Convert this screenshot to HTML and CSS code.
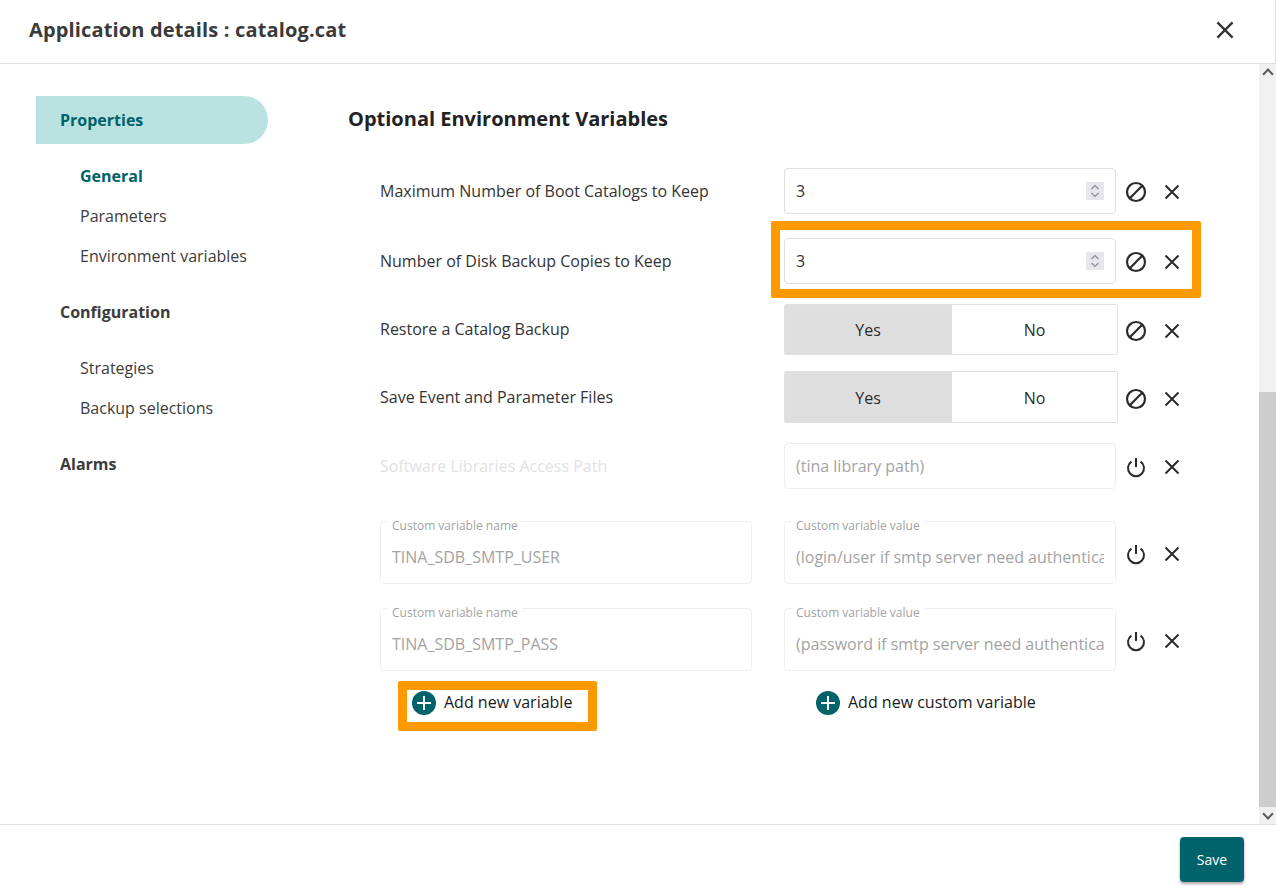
FILE: index.html
```html
<!DOCTYPE html>
<html lang="en">
<head>
  <meta charset="UTF-8">
  <title>Application details : catalog.cat</title>
  <link rel="stylesheet" href="styles.css">
</head>
<body>
  <svg class="icon-defs" width="0" height="0">
    <symbol id="i-close" viewBox="0 0 24 24"><path d="M5.5 5.5l13 13M18.5 5.5l-13 13" fill="none" stroke="currentColor" stroke-width="2"/></symbol>
    <symbol id="i-ban" viewBox="0 0 24 24"><circle cx="12" cy="12" r="9" fill="none" stroke="currentColor" stroke-width="2.2"/><path d="M5.8 18.2L18.2 5.8" fill="none" stroke="currentColor" stroke-width="2.2"/></symbol>
    <symbol id="i-power" viewBox="0 0 24 24"><path d="M7.4 6.6a8 8 0 1 0 9.2 0M12 3v9" fill="none" stroke="currentColor" stroke-width="2"/></symbol>
    <symbol id="i-stepper" viewBox="0 0 18 18"><path d="M5.5 7l3.5-3.5 3.5 3.5M5.5 11l3.5 3.5 3.5-3.5" fill="none" stroke="currentColor" stroke-width="1.2"/></symbol>
  </svg>

  <div class="page">
    <header class="top-bar">
      <h1 class="top-title">Application details : catalog.cat</h1>
      <button class="top-close" type="button"><svg class="icon-close-lg"><use href="#i-close"/></svg></button>
    </header>

    <div class="middle">
      <nav class="side-nav">
        <a class="nav-head nav-head-active">Properties</a>
        <ul class="nav-list">
          <li class="nav-item nav-item-active">General</li>
          <li class="nav-item">Parameters</li>
          <li class="nav-item">Environment variables</li>
        </ul>
        <a class="nav-head">Configuration</a>
        <ul class="nav-list">
          <li class="nav-item">Strategies</li>
          <li class="nav-item">Backup selections</li>
        </ul>
        <a class="nav-head">Alarms</a>
      </nav>

      <main class="content">
        <h2 class="content-title">Optional Environment Variables</h2>

        <div class="var-row row-a">
          <span class="var-label">Maximum Number of Boot Catalogs to Keep</span>
          <div class="num-field">
            <input class="field" type="text" value="3">
            <span class="stepper"><svg width="18" height="18"><use href="#i-stepper"/></svg></span>
          </div>
          <div class="var-actions">
            <svg class="icon"><use href="#i-ban"/></svg>
            <svg class="icon"><use href="#i-close"/></svg>
          </div>
        </div>

        <div class="var-row row-b">
          <span class="var-label">Number of Disk Backup Copies to Keep</span>
          <div class="num-field">
            <input class="field" type="text" value="3">
            <span class="stepper"><svg width="18" height="18"><use href="#i-stepper"/></svg></span>
          </div>
          <div class="var-actions">
            <svg class="icon"><use href="#i-ban"/></svg>
            <svg class="icon"><use href="#i-close"/></svg>
          </div>
        </div>

        <div class="var-row row-c">
          <span class="var-label">Restore a Catalog Backup</span>
          <div class="toggle">
            <span class="toggle-opt toggle-on">Yes</span>
            <span class="toggle-opt">No</span>
          </div>
          <div class="var-actions actions-low">
            <svg class="icon"><use href="#i-ban"/></svg>
            <svg class="icon"><use href="#i-close"/></svg>
          </div>
        </div>

        <div class="var-row row-d">
          <span class="var-label">Save Event and Parameter Files</span>
          <div class="toggle toggle-tall">
            <span class="toggle-opt toggle-on">Yes</span>
            <span class="toggle-opt">No</span>
          </div>
          <div class="var-actions actions-low">
            <svg class="icon"><use href="#i-ban"/></svg>
            <svg class="icon"><use href="#i-close"/></svg>
          </div>
        </div>

        <div class="var-row row-e">
          <span class="var-label var-label-off">Software Libraries Access Path</span>
          <input class="field field-off" type="text" placeholder="(tina library path)">
          <div class="var-actions">
            <svg class="icon"><use href="#i-power"/></svg>
            <svg class="icon"><use href="#i-close"/></svg>
          </div>
        </div>

        <div class="var-row row-f">
          <div class="float-field">
            <span class="float-label">Custom variable name</span>
            <input class="field field-off field-tall" type="text" placeholder="TINA_SDB_SMTP_USER">
          </div>
          <div class="float-field">
            <span class="float-label">Custom variable value</span>
            <input class="field field-off field-tall" type="text" placeholder="(login/user if smtp server need authentication)">
          </div>
          <div class="var-actions actions-low">
            <svg class="icon"><use href="#i-power"/></svg>
            <svg class="icon"><use href="#i-close"/></svg>
          </div>
        </div>

        <div class="var-row row-g">
          <div class="float-field">
            <span class="float-label">Custom variable name</span>
            <input class="field field-off field-tall" type="text" placeholder="TINA_SDB_SMTP_PASS">
          </div>
          <div class="float-field">
            <span class="float-label">Custom variable value</span>
            <input class="field field-off field-tall" type="text" placeholder="(password if smtp server need authentication)">
          </div>
          <div class="var-actions actions-low">
            <svg class="icon"><use href="#i-power"/></svg>
            <svg class="icon"><use href="#i-close"/></svg>
          </div>
        </div>

        <div class="var-row row-h">
          <a class="add-link"><span class="add-dot"></span><span class="add-text">Add new variable</span></a>
          <a class="add-link"><span class="add-dot"></span><span class="add-text">Add new custom variable</span></a>
        </div>
      </main>

      <div class="scrollbar">
        <span class="scroll-btn scroll-up"></span>
        <div class="scroll-track"><div class="scroll-thumb"></div></div>
        <span class="scroll-btn scroll-down"></span>
      </div>
    </div>

    <footer class="bottom-bar">
      <button class="save-btn" type="button">Save</button>
    </footer>

    <div class="callout callout-field"></div>
    <div class="callout callout-add"></div>
  </div>
</body>
</html>
```

FILE: styles.css
```css
* {
  box-sizing: border-box;
}

body {
  margin: 0;
  font-family: "Open Sans", "Liberation Sans", sans-serif;
  font-size: 16px;
  color: #2b2b2b;
  background-color: #fff;
  overflow: hidden;
}

.icon-defs {
  position: absolute;
}

.page {
  position: relative;
  display: flex;
  flex-direction: column;
  height: 889px;
}

.top-bar {
  display: flex;
  align-items: center;
  justify-content: space-between;
  height: 64px;
  padding: 0 36px 4px 29px;
  border-bottom: 1px solid #e0e0e0;
  border-right: 1px solid #e0e0e0;
}

.top-title {
  margin: 0;
  font-size: 20px;
  font-weight: 700;
  letter-spacing: 0.15px;
  color: #3a3a3a;
}

.top-close {
  display: flex;
  padding: 0;
  border: none;
  background: none;
  color: #333;
}

.icon-close-lg {
  width: 28px;
  height: 28px;
}

.middle {
  display: flex;
  height: 760px;
}

.side-nav {
  flex: 0 0 348px;
  padding: 32px 0 0 36px;
}

.nav-head {
  display: block;
  width: 232px;
  height: 40px;
  margin-top: 16px;
  padding-left: 24px;
  font-weight: 700;
  line-height: 40px;
  color: #3c3c3c;
}

.nav-head-active {
  height: 48px;
  margin-top: 0;
  border-radius: 0 24px 24px 0;
  background-color: #b9e2e1;
  line-height: 48px;
  color: #00626a;
}

.nav-list {
  margin: 16px 0 0;
  padding: 0 0 0 44px;
  list-style: none;
}

.nav-head-active + .nav-list {
  margin-top: 12px;
}

.nav-item {
  height: 40px;
  line-height: 40px;
  color: #3c3c3c;
}

.nav-item-active {
  font-weight: 700;
  color: #00626a;
}

.content {
  flex: 1;
  padding: 40px 0 0;
}

.content-title {
  margin: 0;
  font-size: 20px;
  font-weight: 700;
  line-height: 30px;
  color: #222;
}

.var-row {
  display: grid;
  grid-template-columns: 372px 332px auto;
  column-gap: 32px;
  align-items: center;
  margin-left: 32px;
}

.row-a { margin-top: 34px; }
.row-b { margin-top: 24px; }
.row-c { margin-top: 20px; }
.row-d { margin-top: 16px; }
.row-e { margin-top: 20px; }
.row-f { margin-top: 32px; }
.row-g { margin-top: 24px; }
.row-h { margin-top: 16px; }

.var-label {
  white-space: nowrap;
  color: #333;
}

.row-c .var-label {
  padding-bottom: 2px;
}

.var-label-off {
  color: #e2e2e2;
}

.field {
  display: block;
  width: 332px;
  height: 46px;
  padding: 0 11px;
  border: 1px solid #e0e0e0;
  border-radius: 4px;
  background-color: #fff;
  font: inherit;
  color: #333;
}

.field-off {
  border-color: #eee;
}

.field-off::placeholder {
  color: #a3a3a3;
  opacity: 1;
}

.field-tall {
  height: 63px;
  padding-top: 8px;
}

.float-field {
  position: relative;
}

.float-field .field {
  width: 100%;
}

.float-label {
  position: absolute;
  top: -3px;
  left: 8px;
  padding: 0 4px;
  background-color: #fff;
  font-size: 12px;
  line-height: 16px;
  color: #a3a3a3;
}

.num-field {
  position: relative;
}

.stepper {
  position: absolute;
  top: 14px;
  right: 12px;
  display: flex;
  width: 18px;
  height: 18px;
  background-color: #e7e7eb;
  color: #8a8a90;
}

.var-actions {
  display: flex;
  gap: 12px;
  margin-left: -24px;
  padding-top: 2px;
  color: #2b2b2b;
}

.actions-low {
  padding-top: 3px;
}

.icon {
  width: 24px;
  height: 24px;
}

.toggle {
  display: flex;
  width: 334px;
  height: 51px;
  border: 1px solid #e0e0e0;
  border-radius: 2px;
}

.toggle-tall {
  height: 52px;
}

.toggle-opt {
  flex: 1;
  display: flex;
  align-items: center;
  justify-content: center;
  color: #2b2b2b;
}

.toggle-tall .toggle-opt {
  padding-top: 2px;
}

.toggle-on {
  flex: 0 0 167px;
  padding-right: 1px;
  background-color: #dfdfdf;
}

.add-link {
  display: flex;
  align-items: center;
  gap: 8px;
  height: 32px;
  padding-left: 32px;
  color: #1a1a1a;
}

.add-text {
  padding-bottom: 2px;
}

.add-dot {
  position: relative;
  width: 24px;
  height: 24px;
  border-radius: 50%;
  background-color: #00626a;
}

.add-dot::before,
.add-dot::after {
  content: "";
  position: absolute;
  background-color: #fff;
}

.add-dot::before {
  top: 11px;
  left: 5px;
  width: 14px;
  height: 2px;
}

.add-dot::after {
  top: 5px;
  left: 11px;
  width: 2px;
  height: 14px;
}

.scrollbar {
  display: flex;
  flex-direction: column;
  flex: 0 0 17px;
  background-color: #f0f0f0;
}

.scroll-btn {
  position: relative;
  flex: 0 0 17px;
}

.scroll-btn::before {
  content: "";
  position: absolute;
  left: 5px;
  width: 6px;
  height: 6px;
  border-top: 2.5px solid #5c5c5c;
  border-left: 2.5px solid #5c5c5c;
}

.scroll-up::before {
  top: 6px;
  transform: rotate(45deg);
}

.scroll-down::before {
  top: 3px;
  transform: rotate(225deg);
}

.scroll-track {
  display: flex;
  flex: 1;
  align-items: flex-end;
}

.scroll-thumb {
  width: 100%;
  height: 415px;
  background-color: #cdcdcd;
}

.bottom-bar {
  display: flex;
  justify-content: flex-end;
  height: 65px;
  padding: 12px 32px 0 0;
  border-top: 1px solid #e0e0e0;
}

.save-btn {
  width: 64px;
  height: 45px;
  border: none;
  border-radius: 4px;
  background-color: #00626a;
  box-shadow: 0 2px 3px rgba(0, 0, 0, 0.35);
  font-family: inherit;
  font-size: 14px;
  color: #fff;
}

/* orange annotation frames drawn over the page */
.callout {
  position: absolute;
  border: 9px solid #ff9900;
  border-radius: 2px;
}

.callout-field {
  top: 221px;
  left: 771px;
  width: 430px;
  height: 77px;
}

.callout-add {
  top: 681px;
  left: 398px;
  width: 199px;
  height: 50px;
}
```
